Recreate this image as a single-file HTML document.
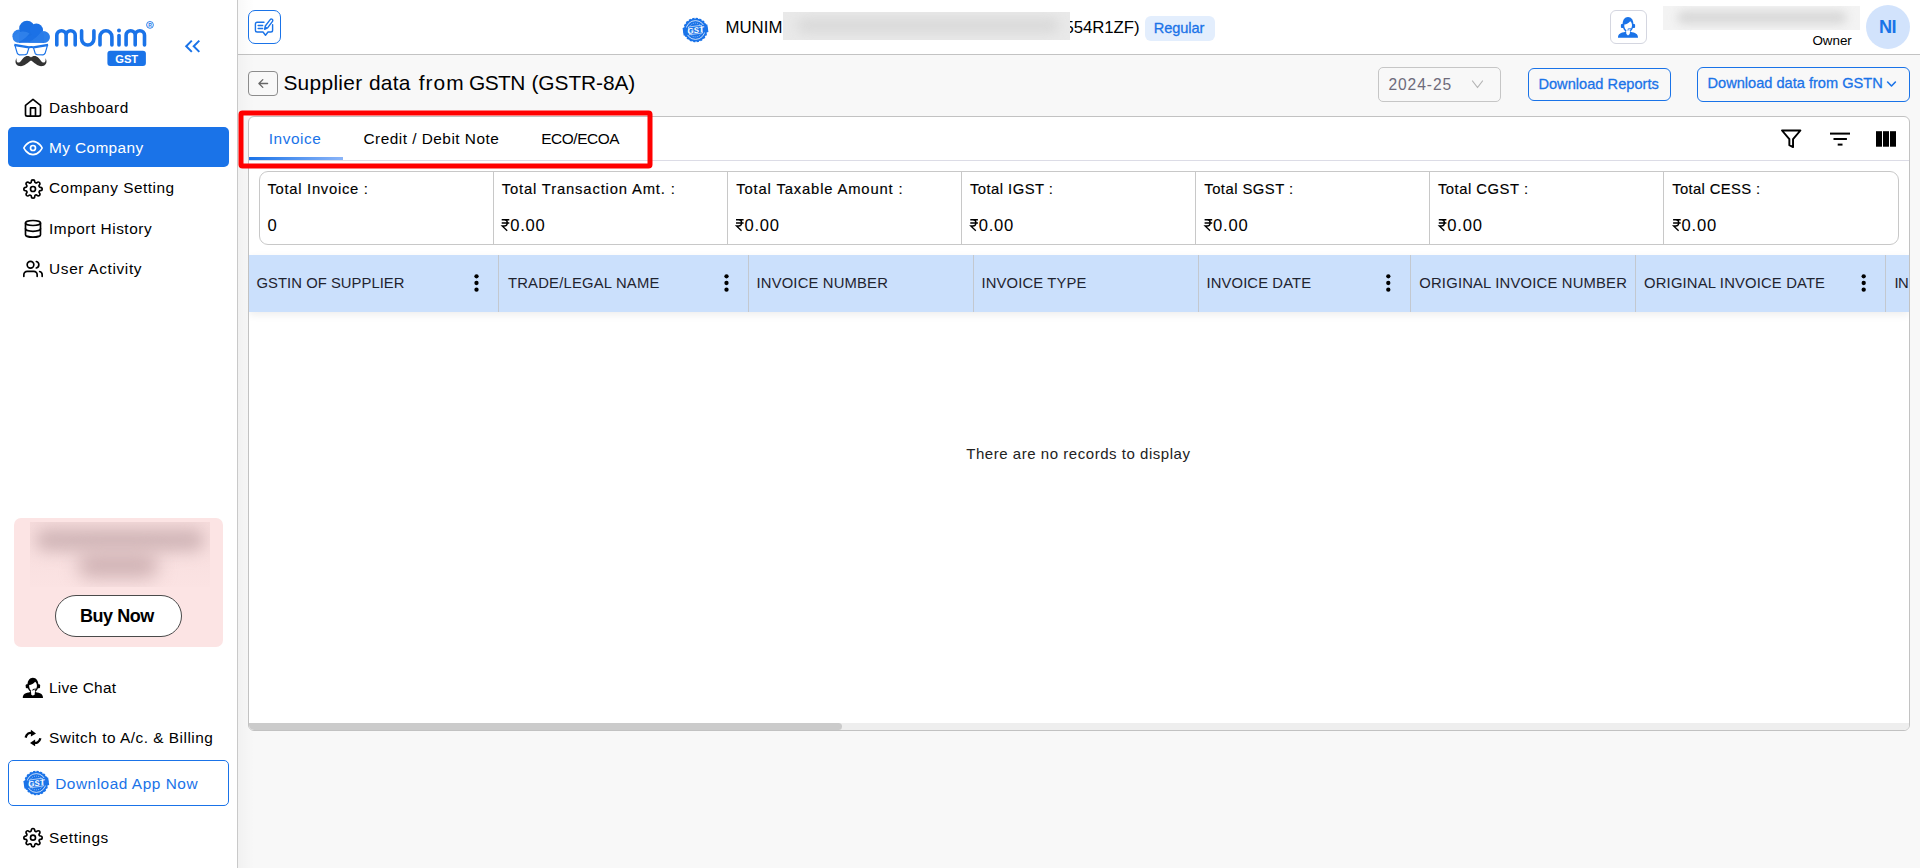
<!DOCTYPE html>
<html><head><meta charset="utf-8"><title>Supplier data from GSTN (GSTR-8A)</title>
<style>
html,body{margin:0;padding:0}
body{width:1920px;height:868px;overflow:hidden;background:#f8f8f8;font-family:"Liberation Sans",sans-serif;position:relative}
.a{position:absolute;box-sizing:border-box}
.t{position:absolute;white-space:pre;line-height:1}
#side{left:0;top:0;width:238px;height:868px;background:#fff;border-right:1px solid #c9c9c9}
#top{left:238px;top:0;width:1682px;height:55px;background:#fff;border-bottom:1px solid #c3c3c3}
#card{left:248px;top:116px;width:1662px;height:615px;background:#fff;border:1px solid #c2c2c2;border-radius:6px;overflow:hidden}
</style></head><body>
<div class="a" id="side"></div>
<div class="a" id="top"></div>
<div class="a" style="left:238px;top:0;width:16px;height:868px;background:linear-gradient(90deg,rgba(0,0,0,.028),rgba(0,0,0,0))"></div>

<!-- sidebar -->
<div class="a" style="left:8px;top:127px;width:221px;height:40px;border-radius:5px;background:#1a73e8"></div>
<div class="a" style="left:14px;top:518px;width:209px;height:129px;border-radius:7px;background:#fce4e4"></div>
<div class="a" style="left:30px;top:522px;width:180px;height:65px;overflow:hidden;background:linear-gradient(180deg,#f6dcdc,#fbe3e3)">
  <div class="a" style="left:6px;top:7px;width:168px;height:22px;border-radius:10px;background:#d0b5b7;filter:blur(8px)"></div>
  <div class="a" style="left:48px;top:30px;width:80px;height:26px;border-radius:12px;background:#d0b3b5;filter:blur(9px)"></div>
</div>
<div class="a" style="left:55px;top:595px;width:127px;height:42px;border-radius:21px;background:#fff;border:1px solid #4a4a4a"></div>
<div class="a" style="left:8px;top:760px;width:221px;height:46px;border-radius:5px;background:#fff;border:1px solid #1a73e8"></div>

<!-- header -->
<div class="a" style="left:248px;top:10px;width:33px;height:34px;border-radius:7px;border:1px solid #1a73e8;background:#fff"></div>
<div class="a" style="left:1145px;top:16px;width:70px;height:25px;border-radius:6px;background:#e3eefd"></div>
<div class="a" style="left:1610px;top:10px;width:37px;height:34px;border-radius:6px;border:1px solid #d4d6e0;background:#fff"></div>
<div class="a" style="left:1866px;top:5px;width:44px;height:44px;border-radius:22px;background:#d2e3fc"></div>

<!-- title row -->
<div class="a" style="left:248px;top:71px;width:30px;height:25px;border-radius:4px;border:1px solid #8c8c8c"></div>
<div class="a" style="left:1378px;top:67px;width:123px;height:35px;border-radius:5px;border:1px solid #c6c6c6"></div>
<div class="a" style="left:1528px;top:68px;width:143px;height:33px;border-radius:6px;border:1.5px solid #1a73e8"></div>
<div class="a" style="left:1697px;top:67px;width:213px;height:35px;border-radius:6px;border:1.5px solid #1a73e8"></div>

<!-- card -->
<div class="a" id="card">
  <div class="a" style="left:0;top:43px;width:1660px;height:1px;background:#dcdce6"></div>
  <div class="a" style="left:0;top:40px;width:94px;height:3px;background:linear-gradient(90deg,#1a73e8,#8ab4f8)"></div>
  <div class="a" style="left:10px;top:54px;width:1640px;height:74px;border:1px solid #c8c8c8;border-radius:9px"></div>
  <div class="a" style="left:244px;top:55px;width:1px;height:72px;background:#c8c8c8"></div>
  <div class="a" style="left:478px;top:55px;width:1px;height:72px;background:#c8c8c8"></div>
  <div class="a" style="left:712px;top:55px;width:1px;height:72px;background:#c8c8c8"></div>
  <div class="a" style="left:946px;top:55px;width:1px;height:72px;background:#c8c8c8"></div>
  <div class="a" style="left:1180px;top:55px;width:1px;height:72px;background:#c8c8c8"></div>
  <div class="a" style="left:1414px;top:55px;width:1px;height:72px;background:#c8c8c8"></div>
  <div class="a" style="left:0;top:138px;width:1660px;height:57px;background:#cbe0fc;box-shadow:0 3px 8px rgba(0,0,0,.07)"></div>
  <div class="a" style="left:249px;top:138px;width:1px;height:57px;background:#c3c8cf"></div>
  <div class="a" style="left:499px;top:138px;width:1px;height:57px;background:#c3c8cf"></div>
  <div class="a" style="left:724px;top:138px;width:1px;height:57px;background:#c3c8cf"></div>
  <div class="a" style="left:949px;top:138px;width:1px;height:57px;background:#c3c8cf"></div>
  <div class="a" style="left:1161px;top:138px;width:1px;height:57px;background:#c3c8cf"></div>
  <div class="a" style="left:1386px;top:138px;width:1px;height:57px;background:#c3c8cf"></div>
  <div class="a" style="left:1636px;top:138px;width:1px;height:57px;background:#c3c8cf"></div>
  <div class="a" style="left:0;top:606px;width:1660px;height:7px;background:#eeeeee"></div>
  <div class="a" style="left:0;top:606px;width:593px;height:7px;background:#cbcbcb;border-radius:0 4px 4px 0"></div>
</div>

<span class="t" style="left:49.00px;top:100px;font-size:15.4px;font-weight:400;color:#000;letter-spacing:0.500px;">Dashboard</span>
<span class="t" style="left:49.00px;top:140px;font-size:15.4px;font-weight:400;color:#fff;letter-spacing:0.389px;">My Company</span>
<span class="t" style="left:49.00px;top:180px;font-size:15.4px;font-weight:400;color:#000;letter-spacing:0.500px;">Company Setting</span>
<span class="t" style="left:49.00px;top:221px;font-size:15.4px;font-weight:400;color:#000;letter-spacing:0.523px;">Import History</span>
<span class="t" style="left:49.00px;top:261px;font-size:15.4px;font-weight:400;color:#000;letter-spacing:0.658px;">User Activity</span>
<span class="t" style="left:49.00px;top:680px;font-size:15.4px;font-weight:400;color:#000;letter-spacing:0.250px;">Live Chat</span>
<span class="t" style="left:49.00px;top:730px;font-size:15.4px;font-weight:400;color:#000;letter-spacing:0.504px;">Switch to A/c. &amp; Billing</span>
<span class="t" style="left:55.20px;top:776px;font-size:15.4px;font-weight:400;color:#1a73e8;letter-spacing:0.533px;">Download App Now</span>
<span class="t" style="left:49.00px;top:830px;font-size:15.4px;font-weight:400;color:#000;letter-spacing:0.514px;">Settings</span>
<span class="t" style="left:80.10px;top:607px;font-size:18px;font-weight:700;color:#000;letter-spacing:-0.483px;">Buy Now</span>
<span class="t" style="left:725.50px;top:20px;font-size:16.8px;font-weight:400;color:#000;letter-spacing:0.000px;">MUNIM</span>
<span class="t" style="left:1064.60px;top:20px;font-size:16.8px;font-weight:400;color:#000;letter-spacing:-0.086px;">554R1ZF)</span>
<span class="t" style="left:1153.75px;top:21px;font-size:14.6px;font-weight:400;color:#1a73e8;letter-spacing:-0.075px;-webkit-text-stroke:0.3px #1a73e8;">Regular</span>
<span class="t" style="left:1812.40px;top:34px;font-size:13.4px;font-weight:400;color:#000;letter-spacing:0.000px;">Owner</span>
<span class="t" style="left:1879.00px;top:18px;font-size:18.2px;font-weight:700;color:#1a73e8;letter-spacing:-0.600px;">NI</span>
<span class="t" style="left:283.40px;top:73px;font-size:20.9px;font-weight:400;color:#000;letter-spacing:0.300px;">Supplier</span>
<span class="t" style="left:369.00px;top:73px;font-size:20.9px;font-weight:400;color:#000;letter-spacing:0.250px;">data</span>
<span class="t" style="left:418.75px;top:73px;font-size:20.9px;font-weight:400;color:#000;letter-spacing:1.017px;">from</span>
<span class="t" style="left:469.00px;top:73px;font-size:20.9px;font-weight:400;color:#000;letter-spacing:-0.600px;">GSTN</span>
<span class="t" style="left:531.50px;top:73px;font-size:20.9px;font-weight:400;color:#000;letter-spacing:-0.087px;">(GSTR-8A)</span>
<span class="t" style="left:1388.40px;top:77px;font-size:15.6px;font-weight:400;color:#6e6b7b;letter-spacing:0.925px;">2024-25</span>
<span class="t" style="left:1538.40px;top:77px;font-size:14.6px;font-weight:400;color:#1a73e8;letter-spacing:0.027px;-webkit-text-stroke:0.3px #1a73e8;">Download Reports</span>
<span class="t" style="left:1707.50px;top:76px;font-size:14.6px;font-weight:400;color:#1a73e8;letter-spacing:0.000px;-webkit-text-stroke:0.3px #1a73e8;">Download data from GSTN</span>
<span class="t" style="left:268.70px;top:131px;font-size:15.4px;font-weight:400;color:#1a73e8;letter-spacing:0.567px;">Invoice</span>
<span class="t" style="left:363.50px;top:131px;font-size:15.4px;font-weight:400;color:#000;letter-spacing:0.483px;">Credit / Debit Note</span>
<span class="t" style="left:541.25px;top:131px;font-size:15.4px;font-weight:400;color:#000;letter-spacing:-0.429px;">ECO/ECOA</span>
<span class="t" style="left:267.50px;top:182px;font-size:14.8px;font-weight:400;color:#000;letter-spacing:0.707px;-webkit-text-stroke:0.15px #000;">Total Invoice :</span>
<span class="t" style="left:501.75px;top:182px;font-size:14.8px;font-weight:400;color:#000;letter-spacing:0.837px;-webkit-text-stroke:0.15px #000;">Total Transaction Amt. :</span>
<span class="t" style="left:736.25px;top:182px;font-size:14.8px;font-weight:400;color:#000;letter-spacing:0.845px;-webkit-text-stroke:0.15px #000;">Total Taxable Amount :</span>
<span class="t" style="left:970.00px;top:182px;font-size:14.8px;font-weight:400;color:#000;letter-spacing:0.455px;-webkit-text-stroke:0.15px #000;">Total IGST :</span>
<span class="t" style="left:1204.25px;top:182px;font-size:14.8px;font-weight:400;color:#000;letter-spacing:0.477px;-webkit-text-stroke:0.15px #000;">Total SGST :</span>
<span class="t" style="left:1437.90px;top:182px;font-size:14.8px;font-weight:400;color:#000;letter-spacing:0.518px;-webkit-text-stroke:0.15px #000;">Total CGST :</span>
<span class="t" style="left:1672.20px;top:182px;font-size:14.8px;font-weight:400;color:#000;letter-spacing:0.364px;-webkit-text-stroke:0.15px #000;">Total CESS :</span>
<span class="t" style="left:267.40px;top:218px;font-size:16.6px;font-weight:400;color:#000;letter-spacing:0.000px;">0</span>
<span class="t" style="left:510.18px;top:218px;font-size:16.6px;font-weight:400;color:#000;letter-spacing:0.767px;">0.00</span>
<span class="t" style="left:744.46px;top:218px;font-size:16.6px;font-weight:400;color:#000;letter-spacing:0.767px;">0.00</span>
<span class="t" style="left:978.74px;top:218px;font-size:16.6px;font-weight:400;color:#000;letter-spacing:0.767px;">0.00</span>
<span class="t" style="left:1213.02px;top:218px;font-size:16.6px;font-weight:400;color:#000;letter-spacing:0.767px;">0.00</span>
<span class="t" style="left:1447.30px;top:218px;font-size:16.6px;font-weight:400;color:#000;letter-spacing:0.767px;">0.00</span>
<span class="t" style="left:1681.58px;top:218px;font-size:16.6px;font-weight:400;color:#000;letter-spacing:0.767px;">0.00</span>
<span class="t" style="left:256.50px;top:276px;font-size:14.8px;font-weight:400;color:#1f2430;letter-spacing:0.050px;">GSTIN OF SUPPLIER</span>
<span class="t" style="left:508.00px;top:276px;font-size:14.8px;font-weight:400;color:#1f2430;letter-spacing:0.200px;">TRADE/LEGAL NAME</span>
<span class="t" style="left:756.50px;top:276px;font-size:14.8px;font-weight:400;color:#1f2430;letter-spacing:0.173px;">INVOICE NUMBER</span>
<span class="t" style="left:981.50px;top:276px;font-size:14.8px;font-weight:400;color:#1f2430;letter-spacing:0.136px;">INVOICE TYPE</span>
<span class="t" style="left:1206.50px;top:276px;font-size:14.8px;font-weight:400;color:#1f2430;letter-spacing:0.114px;">INVOICE DATE</span>
<span class="t" style="left:1419.30px;top:276px;font-size:14.8px;font-weight:400;color:#1f2430;letter-spacing:0.191px;">ORIGINAL INVOICE NUMBER</span>
<span class="t" style="left:1644.10px;top:276px;font-size:14.8px;font-weight:400;color:#1f2430;letter-spacing:0.165px;">ORIGINAL INVOICE DATE</span>
<span class="t" style="left:1894.60px;top:276px;font-size:14.8px;font-weight:400;color:#1f2430;letter-spacing:-0.600px;">IN</span>
<span class="t" style="left:966.25px;top:446px;font-size:15px;font-weight:400;color:#222;letter-spacing:0.538px;">There are no records to display</span>

<div class="a" style="left:1909px;top:255px;width:11px;height:57px;background:#f8f8f8;border-left:1px solid #c2c2c2"></div>
<!-- blur boxes over text -->
<div class="a" style="left:783px;top:12px;width:287px;height:28px;background:#e9e9e9;overflow:hidden">
  <div class="a" style="left:14px;top:6px;width:262px;height:15px;border-radius:8px;background:#d9d9d9;filter:blur(6px)"></div>
</div>
<div class="a" style="left:1663px;top:6px;width:197px;height:24px;background:#f3f3f3;overflow:hidden">
  <div class="a" style="left:14px;top:5px;width:170px;height:13px;border-radius:7px;background:#d8d8d8;filter:blur(5px)"></div>
</div>

<svg class="a" style="left:0;top:0" width="1920" height="868" viewBox="0 0 1920 868">
<!-- LOGO -->
<g>
  <circle cx="19" cy="36.2" r="6.6" fill="#2f80ea"/>
  <circle cx="44" cy="37" r="5.8" fill="#2c7de9"/>
  <rect x="19" y="33" width="25" height="9.8" fill="#1c71e5"/>
  <circle cx="27" cy="28.6" r="7.8" fill="#1a6fe2"/>
  <circle cx="36.4" cy="30.2" r="6.6" fill="#1b71e6"/>
  <path d="M13,38.5 C17,30.5 25,30 29.5,33.5 C26,37.5 22,41 17.5,42.6 C14.5,42 13,40.5 13,38.5Z" fill="#3585ec" opacity=".75"/>
  <path d="M41.5,31.5 C38.5,35.5 34,39.5 28,42.8 L45,42.8 C49,42.3 50.5,38.5 49.3,35.3 C48,32 44.5,30.5 41.5,31.5Z" fill="#2d7fea" opacity=".8"/>
  <!-- glasses -->
  <path d="M14.3,44.7 L29,47.3 Q31.2,46.6 33.4,47.3 L48.1,44.7" fill="none" stroke="#1a73e8" stroke-width="2" stroke-linejoin="round"/>
  <path d="M15,45.6 L28.9,47.8 L27.2,53.4 Q26.7,54.5 25.2,54.6 L19.4,54.8 Q17.9,54.7 17.3,53.3 Z" fill="#fff" stroke="#1a73e8" stroke-width="1.2" stroke-linejoin="round"/>
  <path d="M47.4,45.6 L33.5,47.8 L35.2,53.4 Q35.7,54.5 37.2,54.6 L43,54.8 Q44.5,54.7 45.1,53.3 Z" fill="#fff" stroke="#1a73e8" stroke-width="1.2" stroke-linejoin="round"/>
  <!-- mustache -->
  <path d="M31,57.5 C29.8,56.1 27.5,55.6 25.5,56.4 C23.5,57.2 22.5,58.8 21.5,60.2 C20,62.4 18,63.6 16.8,61.4 C16.3,60.3 16.3,59 16.7,57.9 C14.4,61 15.4,65.4 19.5,66.1 C24,66.8 27.5,63 31,60.6 C34.5,63 38,66.8 42.5,66.1 C46.6,65.4 47.6,61 45.3,57.9 C45.7,59 45.7,60.3 45.2,61.4 C44,63.6 42,62.4 40.5,60.2 C39.5,58.8 38.5,57.2 36.5,56.4 C34.5,55.6 32.2,56.1 31,57.5Z" fill="#333"/>
  <!-- munim -->
  <g fill="none" stroke="#1a73e8" stroke-width="3.6" stroke-linecap="round" stroke-linejoin="round">
    <path d="M56.8,45 V35.35 a4.65,4.65 0 0 1 9.3,0 V45 M66.1,35.35 a4.55,4.55 0 0 1 9.1,0 V45"/>
    <path d="M81.6,30.7 V38.85 a6.15,6.15 0 0 0 12.3,0 V30.7"/>
    <path d="M100,45 V36.65 a5.95,5.95 0 0 1 11.9,0 V45"/>
    <path d="M119,35.6 V45"/>
    <path d="M126.1,45 V35.25 a4.55,4.55 0 0 1 9.1,0 V45 M135.2,35.35 a4.65,4.65 0 0 1 9.3,0 V45"/>
  </g>
  <circle cx="119" cy="30.5" r="2" fill="#1a73e8"/>
  <circle cx="150" cy="24.9" r="3.4" fill="none" stroke="#1a73e8" stroke-width="0.9"/>
  <text x="150" y="26.7" font-family="Liberation Sans, sans-serif" font-size="5" font-weight="700" fill="#1a73e8" text-anchor="middle">R</text>
  <rect x="107.4" y="50.8" width="38.5" height="15.2" rx="3" fill="#1a73e8"/>
  <text x="126.7" y="62.7" font-family="Liberation Sans, sans-serif" font-size="11.2" font-weight="700" fill="#fff" text-anchor="middle" letter-spacing="0">GST</text>
  <g fill="none" stroke="#1a73e8" stroke-width="2" stroke-linecap="butt" stroke-linejoin="miter">
    <polyline points="191.8,40.6 186.2,46.25 191.8,51.9"/>
    <polyline points="199.3,40.6 193.7,46.25 199.3,51.9"/>
  </g>
</g>

<!-- SIDEBAR ICONS (feather, 20px) -->
<g fill="none" stroke="#000" stroke-width="2" stroke-linecap="round" stroke-linejoin="round">
  <g transform="translate(23,97.8) scale(.8333)"><path d="M3 9l9-7 9 7v11a2 2 0 0 1-2 2H5a2 2 0 0 1-2-2z"/><polyline points="9 22 9 12 15 12 15 22"/></g>
  <g transform="translate(23,138) scale(.8333)" stroke="#fff"><path d="M1 12s4-8 11-8 11 8 11 8-4 8-11 8-11-8-11-8z"/><circle cx="12" cy="12" r="3"/></g>
  <g transform="translate(23,179) scale(.8333)"><circle cx="12" cy="12" r="3"/><path d="M19.4 15a1.65 1.65 0 0 0 .33 1.82l.06.06a2 2 0 0 1 0 2.83 2 2 0 0 1-2.83 0l-.06-.06a1.65 1.65 0 0 0-1.82-.33 1.65 1.65 0 0 0-1 1.51V21a2 2 0 0 1-2 2 2 2 0 0 1-2-2v-.09A1.65 1.65 0 0 0 9 19.4a1.65 1.65 0 0 0-1.82.33l-.06.06a2 2 0 0 1-2.83 0 2 2 0 0 1 0-2.83l.06-.06a1.65 1.65 0 0 0 .33-1.82 1.65 1.65 0 0 0-1.51-1H3a2 2 0 0 1-2-2 2 2 0 0 1 2-2h.09A1.65 1.65 0 0 0 4.6 9a1.65 1.65 0 0 0-.33-1.82l-.06-.06a2 2 0 0 1 0-2.83 2 2 0 0 1 2.83 0l.06.06a1.65 1.65 0 0 0 1.82.33H9a1.65 1.65 0 0 0 1-1.51V3a2 2 0 0 1 2-2 2 2 0 0 1 2 2v.09a1.65 1.65 0 0 0 1 1.51 1.65 1.65 0 0 0 1.82-.33l.06-.06a2 2 0 0 1 2.83 0 2 2 0 0 1 0 2.83l-.06.06a1.65 1.65 0 0 0-.33 1.82V9a1.65 1.65 0 0 0 1.51 1H21a2 2 0 0 1 2 2 2 2 0 0 1-2 2h-.09a1.65 1.65 0 0 0-1.51 1z"/></g>
  <g transform="translate(23,218.8) scale(.8333)"><ellipse cx="12" cy="5" rx="9" ry="3"/><path d="M21 12c0 1.66-4 3-9 3s-9-1.34-9-3"/><path d="M3 5v14c0 1.66 4 3 9 3s9-1.34 9-3V5"/></g>
  <g transform="translate(23,258.9) scale(.8333)"><path d="M17 21v-2a4 4 0 0 0-4-4H5a4 4 0 0 0-4 4v2"/><circle cx="9" cy="7" r="4"/><path d="M23 21v-2a4 4 0 0 0-3-3.87"/><path d="M16 3.13a4 4 0 0 1 0 7.75"/></g>
  <g transform="translate(23,827.7) scale(.8333)"><circle cx="12" cy="12" r="3"/><path d="M19.4 15a1.65 1.65 0 0 0 .33 1.82l.06.06a2 2 0 0 1 0 2.83 2 2 0 0 1-2.83 0l-.06-.06a1.65 1.65 0 0 0-1.82-.33 1.65 1.65 0 0 0-1 1.51V21a2 2 0 0 1-2 2 2 2 0 0 1-2-2v-.09A1.65 1.65 0 0 0 9 19.4a1.65 1.65 0 0 0-1.82.33l-.06.06a2 2 0 0 1-2.83 0 2 2 0 0 1 0-2.83l.06-.06a1.65 1.65 0 0 0 .33-1.82 1.65 1.65 0 0 0-1.51-1H3a2 2 0 0 1-2-2 2 2 0 0 1 2-2h.09A1.65 1.65 0 0 0 4.6 9a1.65 1.65 0 0 0-.33-1.82l-.06-.06a2 2 0 0 1 0-2.83 2 2 0 0 1 2.83 0l.06.06a1.65 1.65 0 0 0 1.82.33H9a1.65 1.65 0 0 0 1-1.51V3a2 2 0 0 1 2-2 2 2 0 0 1 2 2v.09a1.65 1.65 0 0 0 1 1.51 1.65 1.65 0 0 0 1.82-.33l.06-.06a2 2 0 0 1 2.83 0 2 2 0 0 1 0 2.83l-.06.06a1.65 1.65 0 0 0-.33 1.82V9a1.65 1.65 0 0 0 1.51 1H21a2 2 0 0 1 2 2 2 2 0 0 1-2 2h-.09a1.65 1.65 0 0 0-1.51 1z"/></g>
</g>

<!-- support agent icon definition -->
<defs>
  <g id="agent">
    <path d="M0,20.7 C0,16.6 2.6,15.9 7.6,14.7 L7.9,12.6 L12.1,12.6 L12.4,14.7 C17.4,15.9 20,16.6 20,20.7 Z"/>
    <rect x="2.9" y="6.9" width="3" height="4" rx="1"/>
    <rect x="14.1" y="6.9" width="3" height="4" rx="1"/>
    <path d="M4.6,8.8 C4.2,3.5 6.8,0.1 10,0.1 C13.2,0.1 15.8,3.5 15.4,8.8 C15.1,12 13,15 10,15.6 C7,15 4.9,12 4.6,8.8Z"/>
    <path d="M6.3,7.6 C8.6,7.2 10.8,6 12.2,4.2 C13.4,5 14.1,6.6 14,8.8 C13.8,11.4 12.2,13.6 10.6,14.1 L10.2,12.6 L13,12 L12.9,11.2 L9.9,11.6 L9.4,14.1 C7.4,13.2 5.9,10.6 6.3,7.6Z" fill="#fff"/>
    <path d="M8,13.4 L12.2,13.4 L11.7,17.1 L10,18.6 L8.4,17.1 Z" fill="#fff"/>
  </g>
  <g id="seal">
    <circle cx="0" cy="0" r="11.5" fill="#1a73e8" stroke="#1a73e8" stroke-width="1.5" stroke-dasharray="2.2 1.41"/>
    <circle cx="0" cy="0" r="9.4" fill="none" stroke="#fff" stroke-width="0.75"/>
    <circle cx="0" cy="0" r="6.9" fill="none" stroke="#fff" stroke-width="0.7" stroke-dasharray="0.9 1.1" opacity=".8"/>
    <g transform="rotate(-8)">
      <rect x="-12.5" y="-3.9" width="25" height="7.8" fill="#1a73e8"/>
      <rect x="-6.6" y="-3.9" width="13.2" height="7.8" fill="#1a73e8" stroke="#fff" stroke-width="0.6"/>
      <text x="0" y="2.9" font-family="Liberation Sans, sans-serif" font-size="8" font-weight="700" font-style="italic" fill="#fff" text-anchor="middle">GST</text>
    </g>
  </g>
</defs>
<use href="#agent" transform="translate(1618,17)" fill="#1a73e8"/>
<use href="#agent" transform="translate(22.8,677.6) scale(1.01,.98)" fill="#000"/>
<use href="#seal" transform="translate(695.5,30)"/>
<use href="#seal" transform="translate(36.3,783)"/>

<!-- switch icon -->
<g fill="none" stroke="#000" stroke-width="2.3" stroke-linecap="butt">
  <path d="M25.6,737.6 C26.6,733.6 29.6,732.4 32,733"/>
  <path d="M40.4,738.2 C39.4,742.2 36.4,743.4 34,742.8"/>
</g>
<path d="M30.9,729.8 L36,733.4 L30.9,736.6 Z" fill="#000"/>
<path d="M35.1,739.4 L30,742.9 L35.1,746.2 Z" fill="#000"/>

<!-- feedback icon -->
<g fill="none" stroke="#1a73e8" stroke-width="1.4" stroke-linecap="round" stroke-linejoin="round">
  <path d="M264,22.2 H257.2 a1.8,1.8 0 0 0 -1.8,1.8 V30.2 a1.8,1.8 0 0 0 1.8,1.8 H263 L265.5,35.2 L268,32 H270.8 a1.8,1.8 0 0 0 1.8,-1.8 V24.6"/>
  <path d="M258.2,25.4 H262.6 M258.2,28.6 H262.6" stroke-width="1.5"/>
  <path d="M264.6,29.3 L265.3,26 L270.2,19.6 a1.4,1.4 0 0 1 2.3,1.7 L267.6,27.8 Z"/>
</g>
<path d="M264.5,29.5 L265.3,26.2 L267.5,27.8 Z" fill="#1a73e8"/>

<!-- back arrow -->
<g fill="none" stroke="#666" stroke-width="1.3" stroke-linecap="round" stroke-linejoin="round">
  <path d="M267.6,83.5 H259 M262.8,79.6 L258.9,83.5 L262.8,87.4"/>
</g>
<!-- select chevron -->
<polyline points="1472.5,81 1477.5,87.5 1482.5,81" fill="none" stroke="#b4b4b4" stroke-width="1.2" stroke-linecap="round" stroke-linejoin="round"/>
<!-- btn chevron -->
<polyline points="1887.6,82 1891.5,86 1895.4,82" fill="none" stroke="#1a73e8" stroke-width="1.6" stroke-linecap="round" stroke-linejoin="round"/>

<!-- toolbar icons -->
<g transform="translate(1780.16,127.74) scale(.92)"><polygon points="22 3 2 3 10 12.46 10 19 14 21 14 12.46 22 3" fill="none" stroke="#000" stroke-width="2.1" stroke-linejoin="round"/></g>
<g fill="#000">
  <rect x="1830" y="132.6" width="20" height="2"/>
  <rect x="1833.5" y="138" width="13.4" height="2"/>
  <rect x="1837.7" y="143.6" width="4.8" height="2"/>
  <rect x="1876" y="131.2" width="6" height="15.5"/>
  <rect x="1883" y="131.2" width="6" height="15.5"/>
  <rect x="1890" y="131.2" width="6" height="15.5"/>
</g>
<!-- kebabs -->
<g fill="#000">
  <circle cx="476.5" cy="276.3" r="2.15"/><circle cx="476.5" cy="283" r="2.15"/><circle cx="476.5" cy="289.7" r="2.15"/>
  <circle cx="726.5" cy="276.3" r="2.15"/><circle cx="726.5" cy="283" r="2.15"/><circle cx="726.5" cy="289.7" r="2.15"/>
  <circle cx="1388.3" cy="276.3" r="2.15"/><circle cx="1388.3" cy="283" r="2.15"/><circle cx="1388.3" cy="289.7" r="2.15"/>
  <circle cx="1863.7" cy="276.3" r="2.15"/><circle cx="1863.7" cy="283" r="2.15"/><circle cx="1863.7" cy="289.7" r="2.15"/>
</g>
<!-- rupee glyphs -->
<defs>
  <g id="rs" fill="none" stroke="#000" stroke-width="1.35" stroke-linecap="butt" stroke-linejoin="miter">
    <path d="M0.4,0.7 H8 M0.4,4 H8 M0.4,0.7 H3 C5.4,0.7 6,2.4 6,3.8 C6,5.6 5,7 3,7 H0.9 L5.9,11.8"/>
  </g>
</defs>
<use href="#rs" transform="translate(501.3,219)"/>
<use href="#rs" transform="translate(735.6,219)"/>
<use href="#rs" transform="translate(969.9,219)"/>
<use href="#rs" transform="translate(1204.2,219)"/>
<use href="#rs" transform="translate(1438.4,219)"/>
<use href="#rs" transform="translate(1672.7,219)"/>

<!-- red annotation -->
<rect x="241" y="113" width="409" height="53" rx="1.5" fill="none" stroke="#ff0000" stroke-width="5"/>
</svg>

</body></html>
